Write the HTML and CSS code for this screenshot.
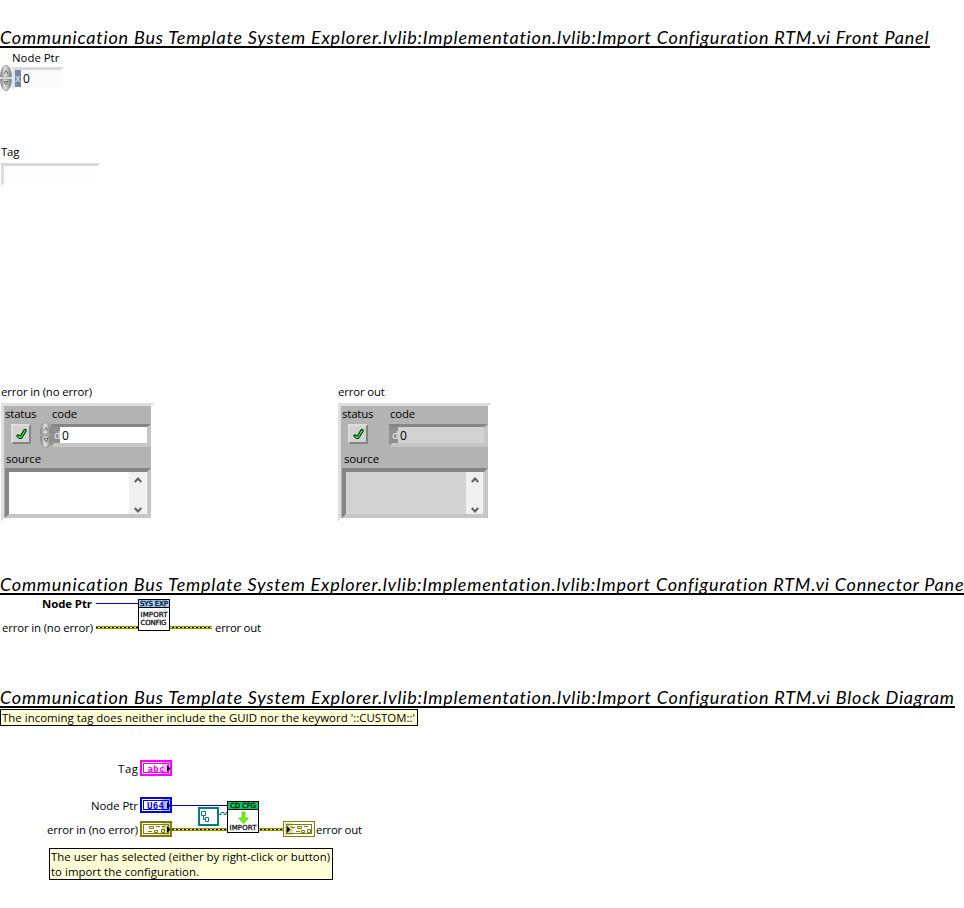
FILE: index.html
```html
<!DOCTYPE html>
<html lang="en">
<head>
<meta charset="utf-8">
<title>Import Configuration RTM.vi</title>
<link rel="stylesheet" href="styles.css">
</head>
<body>
<svg class="defs" width="0" height="0" aria-hidden="true">
  <defs>
    <linearGradient id="metal"><stop offset="0" stop-color="#808080"/><stop offset=".4" stop-color="#e4e4e4"/><stop offset="1" stop-color="#777"/></linearGradient>
    <symbol id="spin" viewBox="0 0 12 26">
      <path d="M.5 12C.5 5 3 .5 6 .5S11.500 5 11.500 12ZM.5 14C.5 21 3 25.500 6 25.500S11.500 21 11.500 14Z" fill="url(#metal)" stroke="#858585" stroke-width=".7"/>
      <path d="M3.800 9 6 5.500 8 9M4 16.500H8L6 20Z" fill="none" stroke="#666" stroke-width=".9"/>
    </symbol>
    <symbol id="check" viewBox="0 0 11 11"><path d="M1 6.500H3L4.500 7.500 8 1H10V3L5.500 10H3L1 8Z" fill="#0f0" stroke="#000"/></symbol>
    <symbol id="up" viewBox="0 0 8 6"><path d="M.8 5 4 1.500 7.200 5" fill="none" stroke="#606060" stroke-width="2"/></symbol>
    <symbol id="down" viewBox="0 0 8 6"><path d="M.8 1 4 4.500 7.200 1" fill="none" stroke="#606060" stroke-width="2"/></symbol>
  </defs>
</svg>

<section class="front">
  <h2 class="t-front">Communication Bus Template System Explorer.lvlib:Implementation.lvlib:Import Configuration RTM.vi Front Panel</h2>
  <div class="label node-label">Node Ptr</div>
  <div class="node-control">
    <svg class="spin" width="12" height="26"><use href="#spin"/></svg>
    <div class="node-field"><span class="radix blue">x</span><span class="num">0</span></div>
  </div>
  <div class="label tag-label">Tag</div>
  <div class="tag-field"></div>
  <div class="clusters">
    <div class="cluster-wrap">
      <div class="label cluster-label">error in (no error)</div>
      <div class="cluster input">
        <div class="top-labels"><span class="label status">status</span><span class="label">code</span></div>
        <div class="values">
          <div class="led"><svg width="11" height="12"><use href="#check"/></svg></div>
          <svg class="spin" width="12" height="26"><use href="#spin"/></svg>
          <div class="code"><span class="radix">d</span><span class="num">0</span></div>
        </div>
        <div class="label source-label">source</div>
        <div class="source"><div class="scroll"><svg width="8" height="6"><use href="#up"/></svg><svg width="8" height="6"><use href="#down"/></svg></div></div>
      </div>
    </div>
    <div class="cluster-wrap">
      <div class="label cluster-label">error out</div>
      <div class="cluster output">
        <div class="top-labels"><span class="label status">status</span><span class="label">code</span></div>
        <div class="values">
          <div class="led"><svg width="11" height="12"><use href="#check"/></svg></div>
          <div class="code"><span class="radix">d</span><span class="num">0</span></div>
        </div>
        <div class="label source-label">source</div>
        <div class="source"><div class="scroll"><svg width="8" height="6"><use href="#up"/></svg><svg width="8" height="6"><use href="#down"/></svg></div></div>
      </div>
    </div>
  </div>
</section>

<section class="connector">
  <h2 class="t-conn">Communication Bus Template System Explorer.lvlib:Implementation.lvlib:Import Configuration RTM.vi Connector Pane</h2>
  <svg class="canvas" width="964" height="50" viewBox="0 595 964 50">
    <text class="bold" x="42" y="608" textLength="50">Node Ptr</text>
    <text x="2" y="632" textLength="91">error in (no error)</text>
    <text x="215" y="632" textLength="46">error out</text>
    <path d="M96 603.500H138" stroke="#00f"/>
    <path class="wire" d="M96 627.500H212"/><path class="wire-core" d="M96 627.500H212"/><path class="wire-dash" d="M96 627.500H212"/>
    <rect x="138.500" y="599.500" width="31" height="31" fill="#fff" stroke="#000"/>
    <rect x="138.500" y="599.500" width="31" height="8" fill="#99ccff" stroke="#000"/>
    <text class="pixel" x="140" y="606" textLength="28">SYS EXP</text>
    <text class="pixel" x="140.500" y="617" textLength="27">IMPORT</text>
    <text class="pixel" x="140.500" y="625" textLength="26">CONFIG</text>
  </svg>
</section>

<section class="block">
  <h2 class="t-block">Communication Bus Template System Explorer.lvlib:Implementation.lvlib:Import Configuration RTM.vi Block Diagram</h2>
  <div class="note"><svg class="canvas" width="416" height="15"><text x="1" y="12" textLength="413">The incoming tag does neither include the GUID nor the keyword '::CUSTOM::'</text></svg></div>
  <svg class="canvas" width="964" height="182" viewBox="0 726 964 182">
    <text x="118" y="773" textLength="20">Tag</text>
    <text x="91" y="810" textLength="47">Node Ptr</text>
    <text x="47" y="834" textLength="91">error in (no error)</text>
    <text x="316" y="834" textLength="46">error out</text>

    <path d="M172 805.500H228" stroke="#00f"/>
    <path class="wire" d="M172 829.500H284"/><path class="wire-core" d="M172 829.500H284"/><path class="wire-dash" d="M172 829.500H284"/>

    <g fill="#fff" stroke="#f0f"><rect x="141" y="761" width="30" height="14" stroke-width="2"/><rect x="143.500" y="763.500" width="25" height="9"/></g>
    <text class="glyph" x="147.500" y="771.500" textLength="17" fill="#f0f">abc</text>
    <rect x="162" y="762" width="8" height="12" fill="#f0f" opacity=".3"/>
    <path d="M167 765V772L170.500 768.500Z"/>

    <g fill="#fff" stroke="#00f"><rect x="141" y="798" width="30" height="14" stroke-width="2"/><rect x="143.500" y="800.500" width="25" height="9"/></g>
    <text class="glyph" x="147" y="808.500" textLength="17" fill="#00f">U64</text>
    <rect x="162" y="799" width="8" height="12" fill="#00f" opacity=".3"/>
    <path d="M167 802V809L170.500 805.500Z"/>

    <g fill="#fff" stroke="#808000"><rect x="141" y="822" width="30" height="14" stroke-width="2"/><rect x="143.500" y="824.500" width="25" height="9"/></g>
    <g fill="none" stroke="#808000"><path d="M149.500 826.500H153.500V828.500H149.500ZM156 826.500H160M148 831.500H152M154.500 830.500H157.500V832.500H154.500ZM161.500 829.500H164.500V832.500H161.500ZM162 826.500H165"/></g>
    <rect x="162" y="823" width="8" height="12" fill="#808000" opacity=".3"/>
    <path d="M167 826V833L170.500 829.500Z"/>

    <rect x="199" y="808" width="19" height="17" fill="#fff" stroke="#008080" stroke-width="2"/>
    <path d="M201.500 811.500H205.500V815.500H201.500ZM203.500 816V819.500H205M205.500 817.500H208.500V821.500H205.500Z" fill="none" stroke="#008080"/>
    <path d="M219 814.500H221V812.500H224V814.500H226V812.500H228" fill="none" stroke="#008080"/>

    <rect x="227.500" y="801.500" width="31" height="31" fill="#fff" stroke="#000"/>
    <rect x="227.500" y="801.500" width="31" height="8" fill="#0c6" stroke="#000"/>
    <text class="pixel" x="230" y="808" textLength="26">CD CFG</text>
    <path d="M242 812H245V818H248.500L243.500 823.500 238.500 818H242Z" fill="#6f0" stroke="#390" stroke-width=".5"/>
    <text class="pixel" x="229.500" y="830" textLength="27">IMPORT</text>

    <g fill="#fff" stroke="#808000"><rect x="283.500" y="821.500" width="31" height="15"/><rect x="286.500" y="824.500" width="25" height="9"/></g>
    <g fill="none" stroke="#808000"><path d="M291 827.500H295M297.500 826.500H301.500V828.500H297.500ZM304 826.500H308M296 831.500H300M301.500 830.500H304.500V832.500H301.500ZM307.500 829.500H310.500V832.500H307.500Z"/></g>
    <rect x="285" y="823" width="8" height="12" fill="#808000" opacity=".3"/>
    <path d="M287 826V833L290.500 829.500Z"/>

    <rect x="49.500" y="848.500" width="283" height="31" fill="#ffffd8" stroke="#000"/>
    <text x="51" y="861" textLength="279">The user has selected (either by right-click or button)</text>
    <text x="51" y="876" textLength="148">to import the configuration.</text>
  </svg>
</section>
</body>
</html>
```

FILE: styles.css
```css
* { box-sizing: border-box; }
body { margin: 0; width: 964px; height: 908px; overflow: hidden; background: #fff; color: #000; font: 11.4px/16px "Open Sans", "Noto Sans", sans-serif; }
svg { display: block; flex: none; }
.defs { position: absolute; }
section { overflow: hidden; }
.front { height: 567px; padding-top: 28px; }
.connector { height: 113px; padding-top: 8px; }
.block { height: 228px; padding-top: 8px; }
h2 { margin: 0; height: 20px; border-bottom: 2px solid #000; overflow: hidden; white-space: nowrap; font: italic 400 18px/19px Lato, sans-serif; letter-spacing: 0.8px; }
.t-front { width: 930px; }
.t-conn { width: 964px; letter-spacing: 0.79px; }
.t-block { width: 955px; }
.label { letter-spacing: -0.15px; white-space: nowrap; }
.node-label { height: 15px; margin: 2px 0 0 12px; letter-spacing: 0; }
.node-control { display: flex; height: 26px; }
.node-field { display: flex; width: 52px; height: 23px; margin-top: 2px; border: 3px solid; border-color: #d9d9d9 #fff #fff #e4e4e4; background: #fafafa; }
.radix { width: 6px; background: #8f8f8f; color: #eee; font-size: 10.5px; line-height: 16px; }
.radix.blue { background: #7488a8; }
.num { padding-left: 2px; line-height: 17px; font-size: 12px; }
.tag-label { margin: 53px 0 0 1px; }
.tag-field { width: 99px; height: 23px; margin: 3px 0 0 1px; border: 3px solid; border-color: #d9d9d9 #fff #fff #dcdcdc; background: #fdfdfd; }
.clusters { display: flex; gap: 182px; margin-top: 198px; }
.cluster-wrap { width: 155px; }
.cluster-label { padding-left: 1px; }
.cluster { height: 119px; margin: 3px 0 0 1px; border: solid; border-width: 3px 4px 4px 3px; border-color: #dedede #fff #fff #dedede; background: #b3b3b3; }
.top-labels { display: flex; padding-left: 1px; height: 16px; }
.status { width: 47px; }
.output .status { width: 48px; }
.values { display: flex; height: 26px; }
.led { display: grid; place-items: center; width: 20px; height: 20px; margin: 2px 9px 0 7px; border: 2px solid; border-color: #ddd #858585 #858585 #ddd; background: #d2d2d2; }
.code { display: flex; flex: 1; height: 23px; margin: 2px 0 0 -1px; border: solid; border-width: 3px 4px 4px 3px; border-color: #858585 #c6c6c6 #c6c6c6 #909090; background: #fff; }
.code .num { padding-left: 2px; line-height: 18px; }
.output .code { margin-left: 12px; }
.source-label { margin: 3px 0 0 2px; }
.output .source-label { margin-left: 3px; }
.source { height: 50px; margin: 1px 0 0 1px; border: 4px solid; border-color: #858585 #c6c6c6 #c6c6c6 #858585; background: #fff; display: flex; justify-content: flex-end; }
.output .code, .output .source { background: #d2d2d2; }
.scroll { width: 17px; margin-right: 1px; background: #f0f0f0; display: flex; flex-direction: column; align-items: center; justify-content: space-between; padding: 5px 0 1px; }
.canvas text { white-space: pre; }
.canvas .bold { font-weight: 700; }
.canvas .pixel { font: 400 7px "DejaVu Sans", sans-serif; stroke: #000; stroke-width: .25px; }
.canvas .glyph { font: 700 9px "DejaVu Sans Mono", monospace; }
.wire { stroke: #8c8c00; stroke-width: 3; }
.wire-core { stroke: #ff0; stroke-width: 1; }
.wire-dash { stroke: #000; stroke-width: 1; stroke-dasharray: 2 2; }
.note { width: 418px; height: 17px; margin-top: 1px; border: 1px solid #000; background: #ffffd8; }
```
